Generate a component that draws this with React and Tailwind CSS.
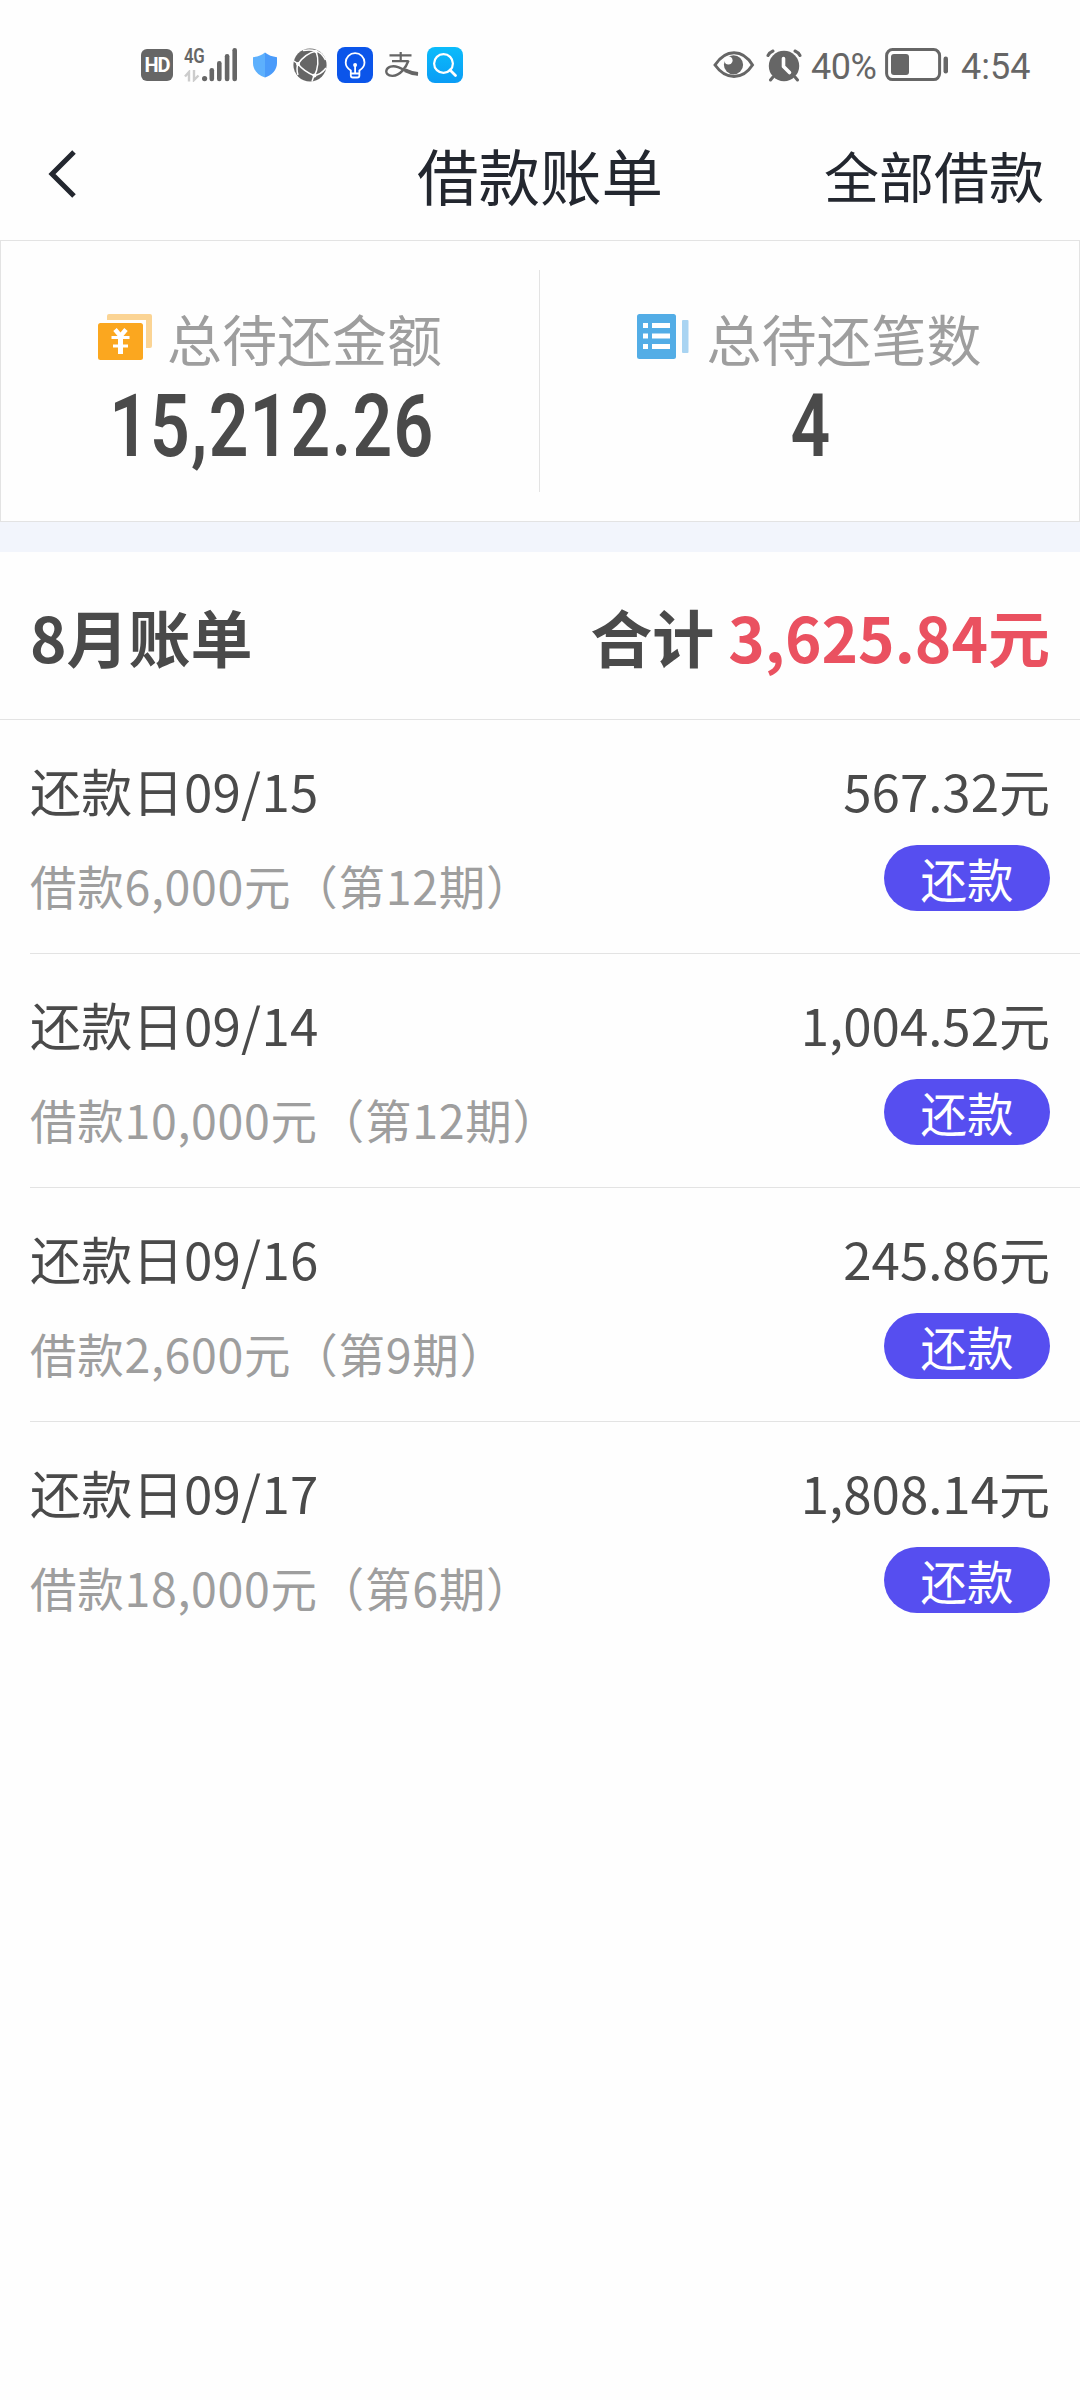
import React from "react";

const bills = [
  { id: 1, date: "09/15", amount: "567.32", loan: "6,000", term: 12 },
  { id: 2, date: "09/14", amount: "1,004.52", loan: "10,000", term: 12 },
  { id: 3, date: "09/16", amount: "245.86", loan: "2,600", term: 9 },
  { id: 4, date: "09/17", amount: "1,808.14", loan: "18,000", term: 6 },
];

function SignalIcon() {
  return (
    <svg width="36" height="34" viewBox="0 0 36 34" fill="#666">
      <circle cx="2.6" cy="30.6" r="2.6" />
      <rect x="7.5" y="20" width="4.6" height="13.3" rx="2.2" />
      <rect x="15" y="13" width="4.6" height="20.3" rx="2.2" />
      <rect x="22.8" y="6" width="4.6" height="27.3" rx="2.2" />
      <rect x="30.4" y="0" width="4.6" height="33.3" rx="2.2" />
    </svg>
  );
}

function ShieldIcon() {
  return (
    <svg width="26" height="26" viewBox="0 0 26 26">
      <path d="M13 0.5C16.5 3.4 20 4.6 25 5.2V11C25 18 20 23 13 25.6Z" fill="#4a9bfa" />
      <path d="M13 0.5C9.5 3.4 6 4.6 1 5.2V11C1 18 6 23 13 25.6Z" fill="#5db0fd" />
    </svg>
  );
}

function GlobeIcon() {
  return (
    <svg width="34" height="34" viewBox="0 0 34 34">
      <circle cx="17" cy="17" r="16.6" fill="#666" />
      <g fill="none" stroke="#fff" strokeWidth="1.5">
        <path d="M5 16C9 10 15 5 23 3" />
        <path d="M23 3C25.5 10 25.5 20 21 29" />
        <path d="M5 16C9 21 15 25 21 27.5" />
        <path d="M5 16L1 13M5 16C3.5 20 4 24 5 27" />
        <path d="M10 2.5C16 1.5 20 2 23 3C27 4 30 7 32.5 12" />
        <path d="M21 27.5C26 27 30 24 33 20M21 27.5L19 33.5" />
      </g>
      <circle cx="5" cy="16" r="2" fill="#fff" />
      <circle cx="23" cy="3.5" r="1.7" fill="#fff" />
      <circle cx="21.5" cy="27.5" r="2" fill="#fff" />
    </svg>
  );
}

function BulbIcon() {
  return (
    <svg width="36" height="36" viewBox="0 0 36 36" fill="none" stroke="#fff" strokeWidth="1.8">
      <rect width="36" height="36" rx="8" fill="#0b55ea" stroke="none" />
      <path d="M13.8 26V23.5C10.5 21.5 8.7 19 8.7 15.5A9.4 9.4 0 0 1 27.5 15.5C27.5 19 25.5 21.5 22.4 23.5V28.5Q22.4 30.5 20.4 30.5H15.8Q13.8 30.5 13.8 28.5Z" />
      <path d="M13.8 26.5H22.4M18.1 26V18" />
      <circle cx="18.1" cy="18" r="2" fill="#fff" stroke="none" />
    </svg>
  );
}

function AlipayIcon() {
  return (
    <svg width="34" height="26" viewBox="0 0 34 26" fill="none" stroke="#666" strokeWidth="2.2">
      <path d="M4.5 3.4H26.5M15.7 0V9M7 9.2H23.5" />
      <path d="M23.5 8.5C21 15.5 15.5 23.5 7.5 23.9C2.5 24 0.8 21 1.4 18.5C2.3 15 7.5 13 13 15.2C19 17.6 25 21 33 22.3" strokeWidth="2.4" />
      <path d="M20 18.2C24 20.2 28 21.5 33 21.8" strokeWidth="3.8" />
    </svg>
  );
}

function SearchIcon() {
  return (
    <svg width="36" height="36" viewBox="0 0 36 36" fill="none" stroke="#fff" strokeWidth="2.2">
      <defs>
        <linearGradient id="search-bg" x1="0" y1="0" x2="0" y2="1">
          <stop offset="0" stopColor="#0bbcfb" />
          <stop offset="1" stopColor="#0a9cf5" />
        </linearGradient>
      </defs>
      <rect width="36" height="36" rx="8" fill="url(#search-bg)" stroke="none" />
      <circle cx="16.5" cy="16.5" r="9.4" />
      <path d="M23 23L28.5 28.5" strokeWidth="2.8" strokeLinecap="round" />
    </svg>
  );
}

function EyeIcon() {
  return (
    <svg width="42" height="28" viewBox="0 0 42 28">
      <path d="M2 14C8 5 14 1.8 21 1.8S34 5 39.5 14C34 22.5 28 25.5 21 25.5S8 22.5 2 14Z" fill="none" stroke="#666" strokeWidth="3" />
      <circle cx="20.5" cy="13.8" r="9.6" fill="#666" />
      <circle cx="15.4" cy="9.4" r="4.2" fill="#fff" />
    </svg>
  );
}

function AlarmIcon() {
  return (
    <svg width="36" height="33" viewBox="0 0 36 33" fill="none" stroke="#666" strokeLinecap="round">
      <circle cx="18" cy="17" r="15.2" fill="#666" stroke="none" />
      <path d="M2 6.5Q3.5 3.5 7 2M34 6.5Q32.5 3.5 29 2" strokeWidth="3" />
      <path d="M7 28L4.5 31M29 28L31.5 31" strokeWidth="3" />
      <path d="M17.5 9.5V17.5L23.5 23.5" stroke="#fff" strokeWidth="3.6" strokeLinejoin="round" />
    </svg>
  );
}

function BatteryIcon() {
  return (
    <svg width="64" height="34" viewBox="0 0 64 34">
      <rect x="1.6" y="1.6" width="53" height="30" rx="6" fill="none" stroke="#666" strokeWidth="3" />
      <rect x="6" y="6" width="18" height="21" rx="3" fill="#666" />
      <rect x="58.5" y="8.5" width="4.5" height="17" rx="2.2" fill="#666" />
    </svg>
  );
}

function YuanIcon() {
  return (
    <svg width="54" height="46" viewBox="0 0 54 46">
      <path d="M9 6V2Q9 0 11 0H52Q54 0 54 2V32Q54 34 52 34H48V6Z" fill="#fbd494" />
      <rect y="9" width="45" height="37" rx="2.5" fill="#fba71f" />
      <g fill="none" stroke="#fff">
        <path d="M17 15.5L22.5 22L28 15.5" strokeWidth="4.5" />
        <path d="M22.5 19V40" strokeWidth="5" />
        <path d="M13.5 23.5H31.5M15 32H30" strokeWidth="2.8" />
      </g>
    </svg>
  );
}

function ListIcon() {
  return (
    <svg width="52" height="46" viewBox="0 0 52 46">
      <rect width="39" height="45" rx="2.5" fill="#53ade6" />
      <rect x="45" y="6" width="6.5" height="33" rx="1" fill="#a9d4f2" />
      <g fill="#fff">
        <path d="M6 9h5v5h-5zM15 9h18v5h-18z" />
        <path d="M6 19.5h5v5h-5zM15 19.5h18v5h-18z" />
        <path d="M6 30h5v5h-5zM15 30h18v5h-18z" />
      </g>
    </svg>
  );
}

function StatusBar() {
  return (
    <div className="flex h-[130px] items-center justify-between pr-[49px] pl-[141px] font-['Roboto'] text-[#666]">
      <div className="flex items-center">
        <div className="flex h-8 w-8 items-center justify-center rounded-md bg-[#666] text-[20px] leading-none font-bold tracking-[-1px] text-white">
          HD
        </div>
        <div className="ml-[11px] flex h-[34px] w-[18px] flex-col justify-between">
          <span className="origin-left scale-x-80 text-[21px] leading-4 font-semibold tracking-[-0.5px]">4G</span>
          <svg width="16" height="12" viewBox="0 0 16 12" fill="none" stroke="#ccc" strokeWidth="2.4">
            <path d="M5 11.5V2L1 6.5M10 0V10L14.5 5.5" />
          </svg>
        </div>
        <SignalIcon />
        <div className="ml-[14px]"><ShieldIcon /></div>
        <div className="ml-[15px]"><GlobeIcon /></div>
        <div className="ml-[10px]"><BulbIcon /></div>
        <div className="ml-[12px]"><AlipayIcon /></div>
        <div className="ml-[8px]"><SearchIcon /></div>
      </div>
      <div className="flex items-center">
        <EyeIcon />
        <div className="ml-[11px]"><AlarmIcon /></div>
        <span className="mt-1 ml-[9px] w-[68px] text-[36px] leading-none tracking-[-0.5px] whitespace-nowrap">40%</span>
        <div className="ml-[6px]"><BatteryIcon /></div>
        <span className="mt-1 ml-[12px] w-[70px] text-[36px] leading-none whitespace-nowrap">4:54</span>
      </div>
    </div>
  );
}

function Summary({ icon, label, value }) {
  return (
    <div className="flex flex-1 flex-col items-center pt-[55px]">
      <div className="flex h-[82px] items-center">
        <div className="mt-[-1px] w-[69px]">{icon}</div>
        <span className="text-[55px] leading-[82px] text-[#9e9e9e]">{label}</span>
      </div>
      <div className="mt-[5px] scale-x-80 pl-[5px] font-['Roboto'] text-[87px] leading-[86px] font-semibold tracking-[1.5px] text-[#4a4a4a]">
        {value}
      </div>
    </div>
  );
}

function BillRow({ bill, last }) {
  return (
    <li className={`ml-[30px] flex h-[234px] justify-between pr-[30px] ${last ? "" : "border-b border-[#e3e3e3]"}`}>
      <div className="pt-[35px]">
        <p className="text-[51px] leading-[70px] tracking-[0.3px] text-[#4a4a4a]">还款日{bill.date}</p>
        <p className="mt-[25px] text-[46.5px] leading-[70px] tracking-[0.7px] text-[#9e9e9e]">
          借款{bill.loan}元（第{bill.term}期）
        </p>
      </div>
      <div className="flex flex-col items-end pt-[35px]">
        <p className="text-[51px] leading-[70px] text-[#4a4a4a]">{bill.amount}元</p>
        <button className="mt-[20px] h-[66px] w-[166px] rounded-full bg-[#564ef0] text-[46.5px] leading-[66px] text-white">
          还款
        </button>
      </div>
    </li>
  );
}

export default function App() {
  return (
    <div className="h-[2400px] w-[1080px] overflow-hidden bg-[#fefefe] font-['Noto_Sans_CJK_SC',sans-serif]">
      <StatusBar />

      <header className="grid h-[110px] grid-cols-[1fr_auto_1fr] items-start px-[36px] text-[#23272f]">
        <svg className="mt-5 ml-[10px]" width="30" height="48" viewBox="0 0 30 48" fill="none" stroke="#23272f" strokeWidth="5">
          <path d="M28 2L6 24L28 46" />
        </svg>
        <h1 className="text-[61.5px] leading-[89px]">借款账单</h1>
        <span className="justify-self-end text-[55px] leading-[89px]">全部借款</span>
      </header>

      <section className="flex h-[282px] items-center border border-[#e3e3e3]">
        <div className="flex h-full w-[538px]">
          <Summary icon={<YuanIcon />} label="总待还金额" value="15,212.26" />
        </div>
        <div className="h-[222px] w-px bg-[#e3e3e3]" />
        <div className="flex h-full flex-1">
          <Summary icon={<ListIcon />} label="总待还笔数" value="4" />
        </div>
      </section>

      <div className="h-[30px] bg-[#f2f5fc]" />

      <div className="flex h-[168px] items-center justify-between border-b border-[#e3e3e3] px-[30px] text-[62px] leading-[92px] font-bold text-[#4a4a4a]">
        <h2>8月账单</h2>
        <p>
          合计 <span className="text-[#ea5160]">3,625.84元</span>
        </p>
      </div>

      <ul>
        {bills.map((bill, i) => (
          <BillRow key={bill.id} bill={bill} last={i === bills.length - 1} />
        ))}
      </ul>
    </div>
  );
}
